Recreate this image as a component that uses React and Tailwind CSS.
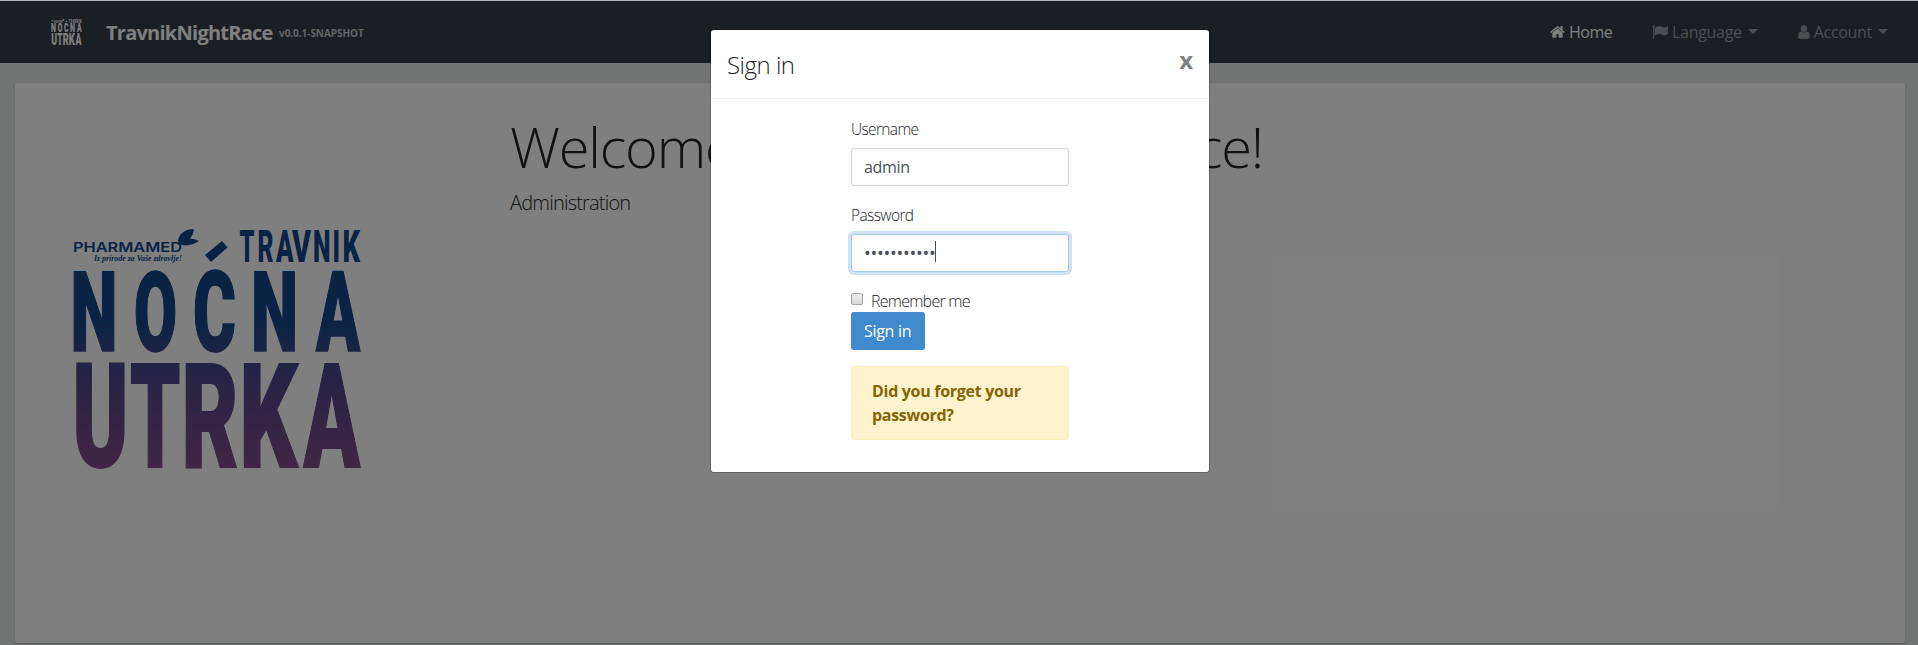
const letterRows = [
  { size: 45, base: 262, stroke: 0, glyphs: [['T', 239.5, 15], ['R', 257.500, 16], ['A', 276, 17.5], ['V', 292, 19], ['N', 313, 17.5], ['I', 332.500, 7.5], ['K', 342.500, 17.5]] },
  { size: 111, base: 350.800, stroke: 1.6, glyphs: [['N', 70.5, 47], ['O', 134, 43], ['C', 193, 43], ['N', 251, 47], ['A', 316, 44]] },
  { size: 144, base: 467.300, stroke: 1.8, glyphs: [['U', 72.5, 56], ['T', 130, 50.5], ['R', 181.5, 57], ['K', 239.5, 58], ['A', 303.5, 56.5]] },
];

function Logo({ className, mono }) {
  const fill = mono ? '#fff' : 'url(#dusk)';
  return (
    <svg viewBox="70 228 294 246" preserveAspectRatio="none" className={className}>
      <defs>
        <linearGradient id="dusk" gradientUnits="userSpaceOnUse" x1="0" y1="320" x2="0" y2="468">
          <stop offset="0" stopColor="#144688" />
          <stop offset="0.3" stopColor="#46468c" />
          <stop offset="1" stopColor="#824c88" />
        </linearGradient>
      </defs>
      <text x="73" y="251.5" fontSize="13" fontWeight="600" fontFamily="Inter, sans-serif" textLength="109" lengthAdjust="spacingAndGlyphs" fill={fill}>PHARMAMED</text>
      <text x="94" y="260.5" fontSize="8" fontWeight="700" fontStyle="italic" fontFamily="Liberation Serif, serif" textLength="88" lengthAdjust="spacingAndGlyphs" fill={fill}>Iz prirode za Vaše zdravlje!</text>
      <path d="M178 241C179 232 187 229 194 229C193 238 187 243 180 242C185 237 193 238 199 241C193 245 186 247 179 244Z" fill={fill} />
      <path d="M205 255L222 241L227.500 247.500L211 262Z" fill={fill} />
      {letterRows.map((row) =>
        row.glyphs.map(([ch, x, w]) => (
          <text key={ch + x} x={x} y={row.base} fontSize={row.size} fontWeight="900" fontFamily="Roboto, sans-serif" textLength={w} lengthAdjust="spacingAndGlyphs" fill={fill} stroke={mono ? 'none' : fill} strokeWidth={row.stroke}>{ch}</text>
        ))
      )}
    </svg>
  );
}

const paths = {
  home: 'M1408 992v480q0 26-19 45t-45 19h-384v-384h-256v384h-384q-26 0-45-19t-19-45v-480q0-1 .5-3t.5-3l575-474 575 474q1 2 1 6zm223-69l-62 74q-8 9-21 11h-3q-13 0-21-7l-692-577-692 577q-12 8-24 7-13-2-21-11l-62-74q-8-10-7-23.5t11-21.5l719-599q32-26 76-26t76 26l244 204v-195q0-14 9-23t23-9h192q14 0 23 9t9 23v408l219 182q10 8 11 21.5t-7 23.5z',
  flag: 'M320 256q0 72-64 110v1266q0 13-9.5 22.5t-22.5 9.5h-64q-13 0-22.5-9.5t-9.5-22.5v-1266q-64-38-64-110 0-53 37.500-90.500t90.500-37.500 90.500 37.500 37.500 90.500zm1472 64v763q0 25-12.500 38.500t-39.500 27.500q-215 116-369 116-61 0-123.500-22t-108.500-48-115.500-48-142.500-22q-192 0-464 146-17 9-33 9-26 0-45-19t-19-45v-742q0-32 31-55 21-14 79-43 236-120 421-120 107 0 200 29t219 88q38 19 88 19 54 0 117.500-21t110-47 88-47 54.500-21q26 0 45 19t19 45z',
  user: 'M1536 1399q0 109-62.500 187t-150.500 78h-854q-88 0-150.500-78t-62.500-187q0-85 8.500-160.500t31.500-152 58.500-131 94-89 134.500-34.500q131 128 313 128t313-128q76 0 134.500 34.500t94 89 58.500 131 31.500 152 8.500 160.500zm-256-887q0 159-112.500 271.500t-271.500 112.500-271.500-112.500-112.500-271.500 112.500-271.500 271.500-112.500 271.500 112.500 112.500 271.500z',
};

function Icon({ name, box, className }) {
  return (
    <svg viewBox={box} fill="currentColor" className={className}>
      <path d={paths[name]} />
    </svg>
  );
}

function Caret() {
  return <span className="ml-[6px] mb-px border-x-[5px] border-t-[5px] border-x-transparent border-t-current" />;
}

function Navbar() {
  return (
    <nav className="flex h-[62px] items-center bg-[#363c46] pl-[51px] pr-[30px] text-white">
      <Logo mono className="h-[27px] w-[31px] shrink-0" />
      <span className="ml-[24px] mt-[2px] w-[173px] shrink-0 whitespace-nowrap text-[20px] font-bold leading-[30px] tracking-[-0.75px]">TravnikNightRace</span>
      <span className="mt-[2px] whitespace-nowrap text-[10px] font-bold text-[#c6c8ca] tracking-[-0.05px]">v0.0.1-SNAPSHOT</span>
      <div className="ml-auto flex text-[16px] leading-6">
        <div className="flex w-[102px] items-center">
          <Icon name="home" box="0 0 1664 1792" className="h-4 w-[15px]" />
          <span className="ml-1 tracking-[-0.5px]">Home</span>
        </div>
        <div className="flex w-[146px] items-center text-[#999ca1]">
          <Icon name="flag" box="0 0 1792 1792" className="h-4 w-4" />
          <span className="ml-1 w-[70px] tracking-[-0.3px]">Language</span>
          <Caret />
        </div>
        <div className="flex w-[90px] items-center text-[#999ca1]">
          <Icon name="user" box="256 0 1280 1792" className="h-4 w-3" />
          <span className="ml-1 w-[59px] tracking-[-0.35px]">Account</span>
          <Caret />
        </div>
      </div>
    </nav>
  );
}

function SignIn() {
  return (
    <div className="h-[442px] w-[498px] rounded-[3px] bg-white text-[#212529] shadow-[0_0_0_1px_rgba(0,0,0,0.2)]">
      <header className="flex h-[69px] justify-between border-b border-[#e9ecef] pl-[16px] pr-[16px] pt-[17px]">
        <h4 className="text-[24px] font-light leading-9 tracking-[-0.5px]">Sign in</h4>
        <span className="-mt-[3px] text-[24px] font-bold leading-[31px] text-[#808080]">x</span>
      </header>
      <div className="ml-[140px] w-[218px] pt-[18px] text-[16px] font-light leading-6">
        <div className="h-[31px] text-[15.500px] tracking-[-0.65px]">Username</div>
        <div className="flex h-[38px] items-center rounded-[3px] border border-[#ced4da] px-3 font-normal text-[#495057] tracking-[-0.3px]">admin</div>
        <div className="mt-[17px] h-[31px] text-[15.500px] tracking-[-0.6px]">Password</div>
        <div className="flex h-[38px] items-center rounded-[3px] border border-[#a3c7e8] px-3 font-normal text-[#495057] shadow-[0_0_0_3px_#cfe2f3]">
          <span className="text-[18px] tracking-[-0.27px]">•••••••••••</span>
          <span className="h-[21px] w-px bg-[#495057] -mt-[3px]" />
        </div>
        <div className="mt-4 flex h-6 items-center">
          <span className="mb-[2px] h-3 w-3 rounded-[2px] border border-[#a4a4a4] bg-gradient-to-b from-[#eee] to-[#d8d8d8]" />
          <span className="ml-2 mt-px tracking-[-0.75px]">Remember me</span>
        </div>
        <div className="flex h-[38px] w-[74px] items-center rounded-[3px] bg-[#3e8acc] pl-[13px] font-normal text-white tracking-[-0.3px]">Sign in</div>
        <div className="mt-4 h-[74px] rounded-[3px] border border-[#ffeeba] bg-[#fff3cd] px-5 py-3 font-bold text-[#856404] tracking-[-0.3px]">Did you forget your password?</div>
      </div>
    </div>
  );
}

export default function App() {
  return (
    <div className="relative h-[645px] overflow-hidden bg-[#e4e8e6] font-['Open_Sans','Noto_Sans',sans-serif]">
      <div className="h-px bg-[#b5b8bb]" />
      <Navbar />
      <main className="ml-[15px] mr-[13px] mt-5 flex h-[560px] rounded-[3px] bg-white shadow-[0_1px_2px_#aaa]">
        <div className="w-[495px] pl-[55px] pt-[145px]">
          <Logo className="h-[246px] w-[294px]" />
        </div>
        <div className="pt-[29px] font-light text-[#212529]">
          <h1 className="whitespace-nowrap text-[56px] leading-[68px] tracking-[-1.23px]">Welcome to Travnik Night Race!</h1>
          <p className="mt-[8px] text-[20px] leading-[30px] tracking-[-0.8px]">Administration</p>
        </div>
      </main>
      <div className="absolute inset-x-0 bottom-0 top-px flex items-start justify-center bg-black/50 pl-[2px] pt-[29px]">
        <SignIn />
      </div>
    </div>
  );
}
